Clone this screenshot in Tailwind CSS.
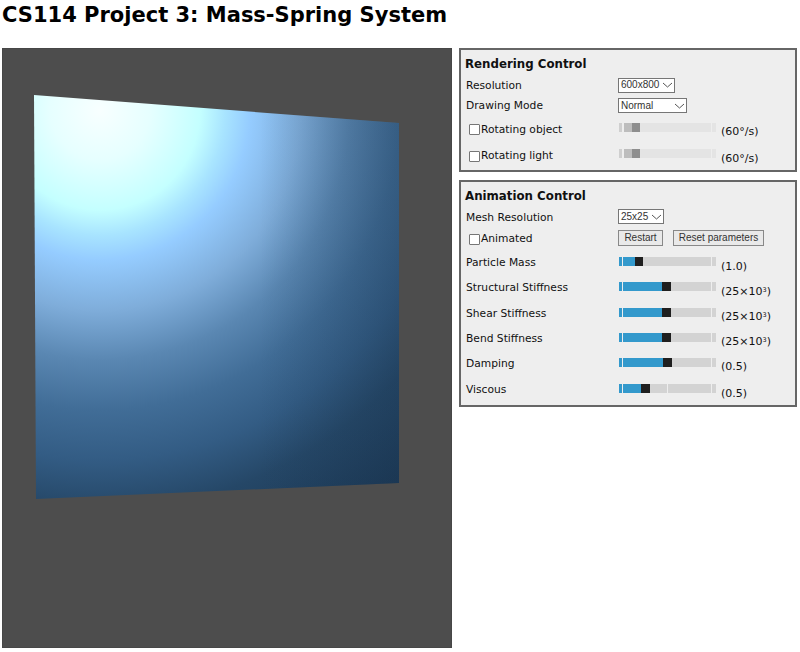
<!doctype html>
<html>
<head>
<meta charset="utf-8">
<script src="https://cdn.jsdelivr.net/npm/@tailwindcss/browser@4"></script>
</head>
<body class="bg-white text-black font-['DejaVu_Sans',sans-serif] overflow-hidden">
<h1 class="h-[48px] pl-[2px] text-[21px] leading-[31px] font-bold">CS114 Project 3: Mass-Spring System</h1>
<div class="flex items-start pl-[2px]">
  <div class="w-[450px] h-[600px] bg-[#4d4d4d] border border-[#474747] flex-none">
    <svg width="450" height="600" viewBox="3 49 450 600" class="block">
      <defs>
        <radialGradient id="light" cx="100" cy="110" r="500" gradientUnits="userSpaceOnUse">
          <stop offset="0" stop-color="#f8ffff"/>
          <stop offset="0.1" stop-color="#e6ffff"/>
          <stop offset="0.2" stop-color="#c4ffff"/>
          <stop offset="0.25" stop-color="#a8e4ff"/>
          <stop offset="0.3" stop-color="#95ccff"/>
          <stop offset="0.4" stop-color="#7fadda"/>
          <stop offset="0.5" stop-color="#5a87b2"/>
          <stop offset="0.6" stop-color="#416d97"/>
          <stop offset="0.7" stop-color="#335c84"/>
          <stop offset="0.8" stop-color="#254767"/>
          <stop offset="0.96" stop-color="#1b3753"/>
        </radialGradient>
        <linearGradient id="falloff" x1="260" y1="0" x2="399" y2="0" gradientUnits="userSpaceOnUse">
          <stop offset="0" stop-color="#1b3753" stop-opacity="0"/>
          <stop offset="1" stop-color="#1b3753" stop-opacity="0.3"/>
        </linearGradient>
      </defs>
      <polygon points="34,95 399,123 399,483 36,499" fill="url(#light)"/>
      <polygon points="34,95 399,123 399,483 36,499" fill="url(#falloff)"/>
    </svg>
  </div>
  <div class="ml-[7px] w-[338px] flex-none text-[10.7px] leading-[14px] text-[#111]">
    <div class="h-[124px] border-2 border-[#666] bg-[#eeeeee] pl-[4px] pr-[3px] pt-[7px]">
      <div class="font-bold text-[11.8px] leading-[15px] h-[15px]">Rendering Control</div>
      <div class="grid grid-cols-[153px_1fr] items-center mt-[5px] h-[15px]">
        <span class="pl-[1px] pt-[2px]">Resolution</span>
        <div class="w-[57px] h-[15px] border border-[#767676] bg-white font-['Liberation_Sans',sans-serif] text-[10px] leading-[12px] pl-[2px] flex justify-between items-center pr-[1px] text-[#333]">600x800<svg width="11" height="6" viewBox="0 0 11 6"><path d="M1 1l4.5 4L10 1" fill="none" stroke="#555"/></svg></div>
      </div>
      <div class="grid grid-cols-[153px_1fr] items-center mt-[6px] h-[15px]">
        <span class="pl-[1px]">Drawing Mode</span>
        <div class="w-[69px] h-[15px] border border-[#767676] bg-white font-['Liberation_Sans',sans-serif] text-[10px] leading-[12px] pl-[2px] flex justify-between items-center pr-[1px] text-[#333]">Normal<svg width="11" height="6" viewBox="0 0 11 6"><path d="M1 1l4.5 4L10 1" fill="none" stroke="#555"/></svg></div>
      </div>
      <div class="grid grid-cols-[154px_97px_1fr] items-center mt-[7px] h-[17px]">
        <span class="flex items-center pl-[4px]"><span class="w-[11px] h-[11px] mr-[1px] border border-[#767676] rounded-[1px] bg-white"></span>Rotating object</span>
        <div class="relative h-[9px] self-start mt-[3px] bg-[#e4e4e4]">
          <span class="absolute left-0 top-0 h-full w-[3px] bg-[#cfcfcf]"></span>
          <span class="absolute left-[3px] top-0 h-full w-[2px] bg-[#eeeeee]"></span>
          <span class="absolute left-[5px] top-0 h-full w-[8px] bg-[#bdbdbd]"></span>
          <span class="absolute left-[13px] top-0 h-full w-[8px] bg-[#8e8e8e]"></span>
          <span class="absolute right-[4px] top-0 h-full w-[1px] bg-[#eeeeee]"></span>
        </div>
        <span class="pl-[5px] pt-[5px] text-[11px]">(60°/s)</span>
      </div>
      <div class="grid grid-cols-[154px_97px_1fr] items-center mt-[9px] h-[17px]">
        <span class="flex items-center pl-[4px]"><span class="w-[11px] h-[11px] mr-[1px] border border-[#767676] rounded-[1px] bg-white"></span>Rotating light</span>
        <div class="relative h-[9px] self-start mt-[3px] bg-[#e4e4e4]">
          <span class="absolute left-0 top-0 h-full w-[3px] bg-[#cfcfcf]"></span>
          <span class="absolute left-[3px] top-0 h-full w-[2px] bg-[#eeeeee]"></span>
          <span class="absolute left-[5px] top-0 h-full w-[8px] bg-[#bdbdbd]"></span>
          <span class="absolute left-[13px] top-0 h-full w-[8px] bg-[#8e8e8e]"></span>
          <span class="absolute right-[4px] top-0 h-full w-[1px] bg-[#eeeeee]"></span>
        </div>
        <span class="pl-[5px] pt-[6px] text-[11px]">(60°/s)</span>
      </div>
    </div>
    <div class="mt-[8px] h-[227px] border-2 border-[#666] bg-[#eeeeee] pl-[4px] pr-[3px] pt-[7px]">
      <div class="font-bold text-[11.8px] leading-[15px] h-[15px]">Animation Control</div>
      <div class="grid grid-cols-[153px_1fr] items-center mt-[4px] h-[15px]">
        <span class="pl-[1px] pt-[3px]">Mesh Resolution</span>
        <div class="w-[46px] h-[15px] border border-[#767676] bg-white font-['Liberation_Sans',sans-serif] text-[10px] leading-[12px] pl-[2px] flex justify-between items-center pr-[1px] text-[#333]">25x25<svg width="11" height="6" viewBox="0 0 11 6"><path d="M1 1l4.5 4L10 1" fill="none" stroke="#555"/></svg></div>
      </div>
      <div class="grid grid-cols-[153px_1fr] items-center mt-[7px] h-[16px]">
        <span class="flex items-center pl-[4px] pt-[2px]"><span class="w-[11px] h-[11px] mr-[1px] border border-[#767676] rounded-[1px] bg-white"></span>Animated</span>
        <div class="flex gap-[10px] font-['Liberation_Sans',sans-serif] text-[10px] text-[#333]">
          <button class="w-[45px] h-[16px] border border-[#888] bg-[#e9e9e9] leading-[12px]">Restart</button>
          <button class="w-[91px] h-[16px] border border-[#888] bg-[#e9e9e9] leading-[12px]">Reset parameters</button>
        </div>
      </div>
      <div class="grid grid-cols-[154px_97px_1fr] items-center mt-[8px] h-[17px]">
        <span class="pl-[1px] pb-[2px]">Particle Mass</span>
        <div class="relative h-[9px] self-start mt-[3px] bg-[#d3d3d3]">
          <span class="absolute left-0 top-0 h-full w-[16px] bg-[#3399cc]"></span>
          <span class="absolute left-[3px] top-0 h-full w-[1px] bg-[#eeeeee]"></span>
          <span class="absolute left-[16px] top-0 h-full w-[8px] bg-[#1f1f1f]"></span>
          <span class="absolute right-[4px] top-0 h-full w-[1px] bg-[#eeeeee]"></span>
        </div>
        <span class="pl-[5px] pt-[6px] text-[11px]">(1.0)</span>
      </div>
      <div class="grid grid-cols-[154px_97px_1fr] items-center mt-[8px] h-[17px]">
        <span class="pl-[1px] pb-[2px]">Structural Stiffness</span>
        <div class="relative h-[9px] self-start mt-[3px] bg-[#d3d3d3]">
          <span class="absolute left-0 top-0 h-full w-[43px] bg-[#3399cc]"></span>
          <span class="absolute left-[3px] top-0 h-full w-[1px] bg-[#eeeeee]"></span>
          <span class="absolute left-[43px] top-0 h-full w-[9px] bg-[#1f1f1f]"></span>
          <span class="absolute right-[4px] top-0 h-full w-[1px] bg-[#eeeeee]"></span>
        </div>
        <span class="pl-[5px] pt-[6px] text-[11px]">(25×10<sup class="text-[6.5px]">3</sup>)</span>
      </div>
      <div class="grid grid-cols-[154px_97px_1fr] items-center mt-[9px] h-[17px]">
        <span class="pl-[1px] pb-[2px]">Shear Stiffness</span>
        <div class="relative h-[9px] self-start mt-[3px] bg-[#d3d3d3]">
          <span class="absolute left-0 top-0 h-full w-[43px] bg-[#3399cc]"></span>
          <span class="absolute left-[3px] top-0 h-full w-[1px] bg-[#eeeeee]"></span>
          <span class="absolute left-[43px] top-0 h-full w-[9px] bg-[#1f1f1f]"></span>
          <span class="absolute right-[4px] top-0 h-full w-[1px] bg-[#eeeeee]"></span>
        </div>
        <span class="pl-[5px] pt-[5px] text-[11px]">(25×10<sup class="text-[6.5px]">3</sup>)</span>
      </div>
      <div class="grid grid-cols-[154px_97px_1fr] items-center mt-[8px] h-[17px]">
        <span class="pl-[1px] pb-[2px]">Bend Stiffness</span>
        <div class="relative h-[9px] self-start mt-[3px] bg-[#d3d3d3]">
          <span class="absolute left-0 top-0 h-full w-[43px] bg-[#3399cc]"></span>
          <span class="absolute left-[3px] top-0 h-full w-[1px] bg-[#eeeeee]"></span>
          <span class="absolute left-[43px] top-0 h-full w-[9px] bg-[#1f1f1f]"></span>
          <span class="absolute right-[4px] top-0 h-full w-[1px] bg-[#eeeeee]"></span>
        </div>
        <span class="pl-[5px] pt-[5px] text-[11px]">(25×10<sup class="text-[6.5px]">3</sup>)</span>
      </div>
      <div class="grid grid-cols-[154px_97px_1fr] items-center mt-[8px] h-[17px]">
        <span class="pl-[1px] pb-[2px]">Damping</span>
        <div class="relative h-[9px] self-start mt-[3px] bg-[#d3d3d3]">
          <span class="absolute left-0 top-0 h-full w-[44px] bg-[#3399cc]"></span>
          <span class="absolute left-[3px] top-0 h-full w-[1px] bg-[#eeeeee]"></span>
          <span class="absolute left-[44px] top-0 h-full w-[9px] bg-[#1f1f1f]"></span>
          <span class="absolute right-[4px] top-0 h-full w-[1px] bg-[#eeeeee]"></span>
        </div>
        <span class="pl-[5px] pt-[5px] text-[11px]">(0.5)</span>
      </div>
      <div class="grid grid-cols-[154px_97px_1fr] items-center mt-[9px] h-[17px]">
        <span class="pl-[1px] pb-[2px]">Viscous</span>
        <div class="relative h-[9px] self-start mt-[3px] bg-[#d3d3d3]">
          <span class="absolute left-0 top-0 h-full w-[22px] bg-[#3399cc]"></span>
          <span class="absolute left-[3px] top-0 h-full w-[1px] bg-[#eeeeee]"></span>
          <span class="absolute left-[22px] top-0 h-full w-[9px] bg-[#1f1f1f]"></span>
          <span class="absolute left-[48px] top-0 h-full w-[1px] bg-[#eeeeee]"></span>
          <span class="absolute right-[4px] top-0 h-full w-[1px] bg-[#eeeeee]"></span>
        </div>
        <span class="pl-[5px] pt-[6px] text-[11px]">(0.5)</span>
      </div>
    </div>
  </div>
</div>
</body>
</html>
